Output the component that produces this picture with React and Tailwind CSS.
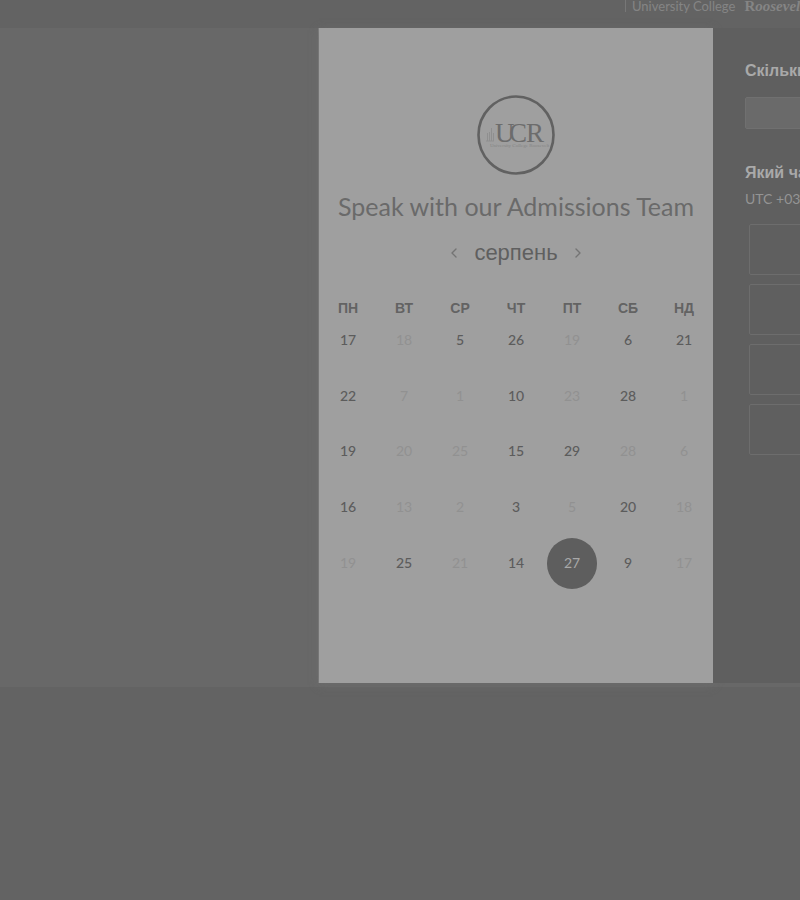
import { ChevronLeft, ChevronRight } from "lucide-react";

const DAYS = ["ПН", "ВТ", "СР", "ЧТ", "ПТ", "СБ", "НД"];

// a = available, x = unavailable, s = selected
const WEEKS = [
  ["17a", "18x", "5a", "26a", "19x", "6a", "21a"],
  ["22a", "7x", "1x", "10a", "23x", "28a", "1x"],
  ["19a", "20x", "25x", "15a", "29a", "28x", "6x"],
  ["16a", "13x", "2x", "3a", "5x", "20a", "18x"],
  ["19x", "25a", "21x", "14a", "27s", "9a", "17x"],
];

const STYLES = {
  a: "text-[#5c5c5c] font-medium",
  x: "text-[#919191]",
  s: "rounded-full bg-[#5e5e5e] text-[#a8a8a8]",
};

function Day({ value }) {
  const kind = value.slice(-1);
  return (
    <button
      type="button"
      disabled={kind === "x"}
      aria-pressed={kind === "s"}
      className={`mx-auto block h-[51px] w-[50px] text-sm ${STYLES[kind]}`}
    >
      {value.slice(0, -1)}
    </button>
  );
}

function Logo() {
  return (
    <svg viewBox="0 0 78 80" className="mx-auto block h-20 w-[78px]" role="img" aria-label="UCR">
      <ellipse cx="39" cy="40" rx="37.5" ry="38.5" fill="none" stroke="#616161" strokeWidth="2.6" />
      <path
        d="M10.500 46V38M12.500 46V37M14.500 46V33M16.500 46V38M9 46h8"
        fill="none"
        stroke="#8f8f8f"
        strokeWidth="1"
      />
      <g fontFamily="'Liberation Serif', serif" fill="#6c6c6c">
        <text x="18" y="47" fontSize="27">U</text>
        <text x="32" y="47" fontSize="27">C</text>
        <text x="49" y="47" fontSize="27">R</text>
        <text x="13" y="52" fontSize="5" fill="#858585">University College Roosevelt</text>
      </g>
    </svg>
  );
}

function Calendar() {
  return (
    <section className="w-[394px] shrink-0 bg-[#9f9f9f] pt-[67px] shadow-[0_2px_8px_#6b6b6b]">
      <Logo />
      <h1 className="mt-[15px] text-center text-[25px] leading-8 text-[#6a6a6a]">
        Speak with our Admissions Team
      </h1>
      <div className="mt-[15px] flex h-8 items-center justify-center gap-3">
        <button type="button" aria-label="Попередній місяць" className="text-[#747474]">
          <ChevronLeft size={16} strokeWidth={2} />
        </button>
        <h2 className="font-['Liberation_Sans',sans-serif] text-[22px] leading-8 text-[#5f5f5f]">
          серпень
        </h2>
        <button type="button" aria-label="Наступний місяць" className="text-[#747474]">
          <ChevronRight size={16} strokeWidth={2} />
        </button>
      </div>
      <table className="mx-auto mt-[35px] h-[287px] w-[392px] table-fixed border-collapse">
        <thead>
          <tr className="h-2">
            {DAYS.map((d) => (
              <th
                key={d}
                scope="col"
                className="p-0 font-['Liberation_Sans',sans-serif] text-sm leading-2 font-bold text-[#636363]"
              >
                {d}
              </th>
            ))}
          </tr>
        </thead>
        <tbody>
          {WEEKS.map((week, i) => (
            <tr key={i}>
              {week.map((v, j) => (
                <td key={j} className="p-0 align-middle">
                  <Day value={v} />
                </td>
              ))}
            </tr>
          ))}
        </tbody>
      </table>
    </section>
  );
}

function Options() {
  return (
    <section className="min-w-0 flex-1 overflow-hidden bg-[#5f5f5f] pt-8 pl-8 whitespace-nowrap">
      <label
        htmlFor="duration"
        className="block font-['Liberation_Sans',sans-serif] text-base leading-[22px] font-bold text-[#a9a9a9]"
      >
        Скільки часу вам потрібно?
      </label>
      <input
        id="duration"
        type="text"
        className="mt-[15px] block h-8 w-80 rounded-xs border border-[#707070] bg-[#6a6a6a]"
      />
      <h3 className="mt-8 font-['Liberation_Sans',sans-serif] text-base leading-6 font-bold text-[#a9a9a9]">
        Який час підходить найкраще?
      </h3>
      <p className="mt-1 text-sm leading-5 text-[#949494]">UTC +03:00</p>
      <div className="mt-[15px] flex w-80 flex-col gap-[9px] pl-1">
        {[1, 2, 3, 4].map((n) => (
          <button
            key={n}
            type="button"
            aria-label={`Час ${n}`}
            className="h-[51px] rounded-xs border border-[#6d6d6d]"
          />
        ))}
      </div>
    </section>
  );
}

export default function App() {
  return (
    <div className="min-h-screen overflow-hidden bg-[#636363] font-[Lato,sans-serif]">
      <header className="flex h-7 overflow-hidden pl-[625px] whitespace-nowrap text-[#858585]">
        <div className="flex h-3 items-center gap-[9px] border-l border-[#777777] pl-[6px]">
          <span className="text-[13px] leading-[10px]">University College</span>
          <span className="font-['Liberation_Serif',serif] text-[15px] leading-[10px] font-bold">
            R<i>oosevelt</i>
          </span>
        </div>
      </header>
      <main className="flex h-[655px]">
        <div className="w-[319px] shrink-0 border-r border-[#808080] bg-[#686868]" />
        <Calendar />
        <Options />
      </main>
      <div className="h-1 bg-[#686868]" />
    </div>
  );
}
